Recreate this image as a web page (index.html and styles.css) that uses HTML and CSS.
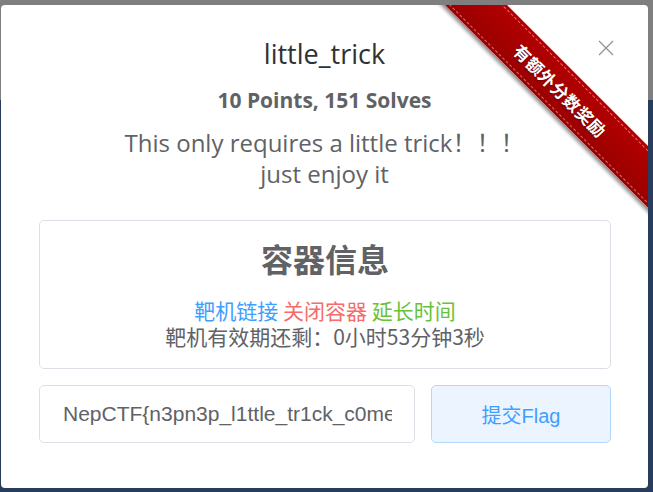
FILE: index.html
```html
<!DOCTYPE html>
<html lang="zh">
<head>
<meta charset="utf-8">
<title>little_trick</title>
<link rel="stylesheet" href="styles.css">
</head>
<body>
<div class="backdrop">
  <div class="modal">
    <div class="ribbon"><span>有额外分数奖励</span></div>
    <button class="close" aria-label="close">
      <svg width="16" height="16" viewBox="0 0 16 16"><path d="M1 1L15 15M15 1L1 15" stroke="#909399" stroke-width="1.3" fill="none"/></svg>
    </button>
    <h2 class="title">little_trick</h2>
    <div class="points">10 Points, 151 Solves</div>
    <div class="desc">This only requires a little trick！！！<br>just enjoy it</div>
    <div class="box">
      <div class="box-title">容器信息</div>
      <div class="links"><span class="blue">靶机链接</span> <span class="red">关闭容器</span> <span class="green">延长时间</span></div>
      <div class="timer">靶机有效期还剩：0小时53分钟3秒</div>
    </div>
    <div class="submit-row">
      <div class="input"><span>NepCTF{n3pn3p_l1ttle_tr1ck_c0me_0n}</span></div>
      <div class="btn">提交Flag</div>
    </div>
  </div>
</div>
</body>
</html>
```
FILE: styles.css
```css
* { box-sizing: border-box; }
html, body { margin: 0; padding: 0; }
body {
  width: 653px;
  height: 492px;
  overflow: hidden;
  background: linear-gradient(#7f7f7f 0, #7f7f7f 100px, #283c5c 100px);
  font-family: "Open Sans", "Noto Sans CJK SC", sans-serif;
}
.backdrop {
  padding: 5px 0 0 1px;
}
.modal {
  position: relative;
  width: 647px;
  height: 483px;
  background: #fff;
  border-radius: 4px;
  overflow: hidden;
  padding-top: 32px;
  text-align: center;
  color: #606266;
}
.ribbon {
  position: absolute;
  left: 380px;
  top: 63px;
  width: 360px;
  height: 44px;
  background: linear-gradient(#b30000, #9a0000);
  transform: rotate(45deg);
  box-shadow: 0 3px 4px rgba(0,0,0,0.45);
  display: flex;
  align-items: center;
  justify-content: center;
}
.ribbon::before {
  content: "";
  position: absolute;
  left: 0; right: 0; top: 3px; bottom: 3px;
  border-top: 1px dashed rgba(255,255,255,0.45);
  border-bottom: 1px dashed rgba(255,255,255,0.45);
}
.ribbon span {
  color: #fff;
  font-weight: 700;
  font-size: 17px;
  letter-spacing: 0.5px;
  text-shadow: 0 1px 2px rgba(0,0,0,0.4);
  font-family: "Noto Sans CJK SC", sans-serif;
}
.close {
  position: absolute;
  left: 597px;
  top: 35px;
  width: 16px;
  height: 16px;
  padding: 0;
  border: 0;
  background: none;
  display: block;
}
.close svg { display: block; }
.title {
  margin: 0;
  font-size: 27px;
  line-height: 34px;
  font-weight: 400;
  color: #303133;
}
.points {
  margin-top: 16px;
  font-size: 21px;
  line-height: 26px;
  font-weight: 700;
  color: #606266;
}
.desc {
  margin-top: 14px;
  font-size: 24px;
  line-height: 31px;
  color: #606266;
}
.box {
  margin: 31px 37px 0 38px;
  height: 149px;
  border: 1px solid #dcdfe6;
  border-radius: 5px;
  padding-top: 16px;
}
.box-title {
  font-family: "Noto Sans CJK SC", sans-serif;
  font-size: 32px;
  line-height: 42px;
  font-weight: 700;
  color: #606266;
}
.links, .timer {
  font-family: "Noto Sans CJK SC", sans-serif;
  font-size: 21px;
  line-height: 26px;
}
.links { margin-top: 18px; }
.blue { color: #409eff; }
.red { color: #f56c6c; }
.green { color: #67c23a; }
.timer { color: #606266; }
.submit-row {
  display: flex;
  gap: 16px;
  margin: 16px 37px 0 38px;
  height: 58px;
}
.input {
  width: 376px;
  border: 1px solid #dcdfe6;
  border-radius: 5px;
  padding: 0 22px 0 23px;
  display: flex;
  align-items: center;
  overflow: hidden;
}
.input span {
  display: block;
  width: 100%;
  overflow: hidden;
  white-space: nowrap;
  text-align: left;
  font-family: "Liberation Sans", Arial, sans-serif;
  font-size: 21px;
  color: #606266;
}
.btn {
  flex: 1;
  background: #ecf5ff;
  border: 1px solid #b3d8ff;
  border-radius: 5px;
  color: #409eff;
  font-family: "Liberation Sans", "Noto Sans CJK SC", sans-serif;
  font-size: 20px;
  display: flex;
  align-items: center;
  justify-content: center;
}
```
